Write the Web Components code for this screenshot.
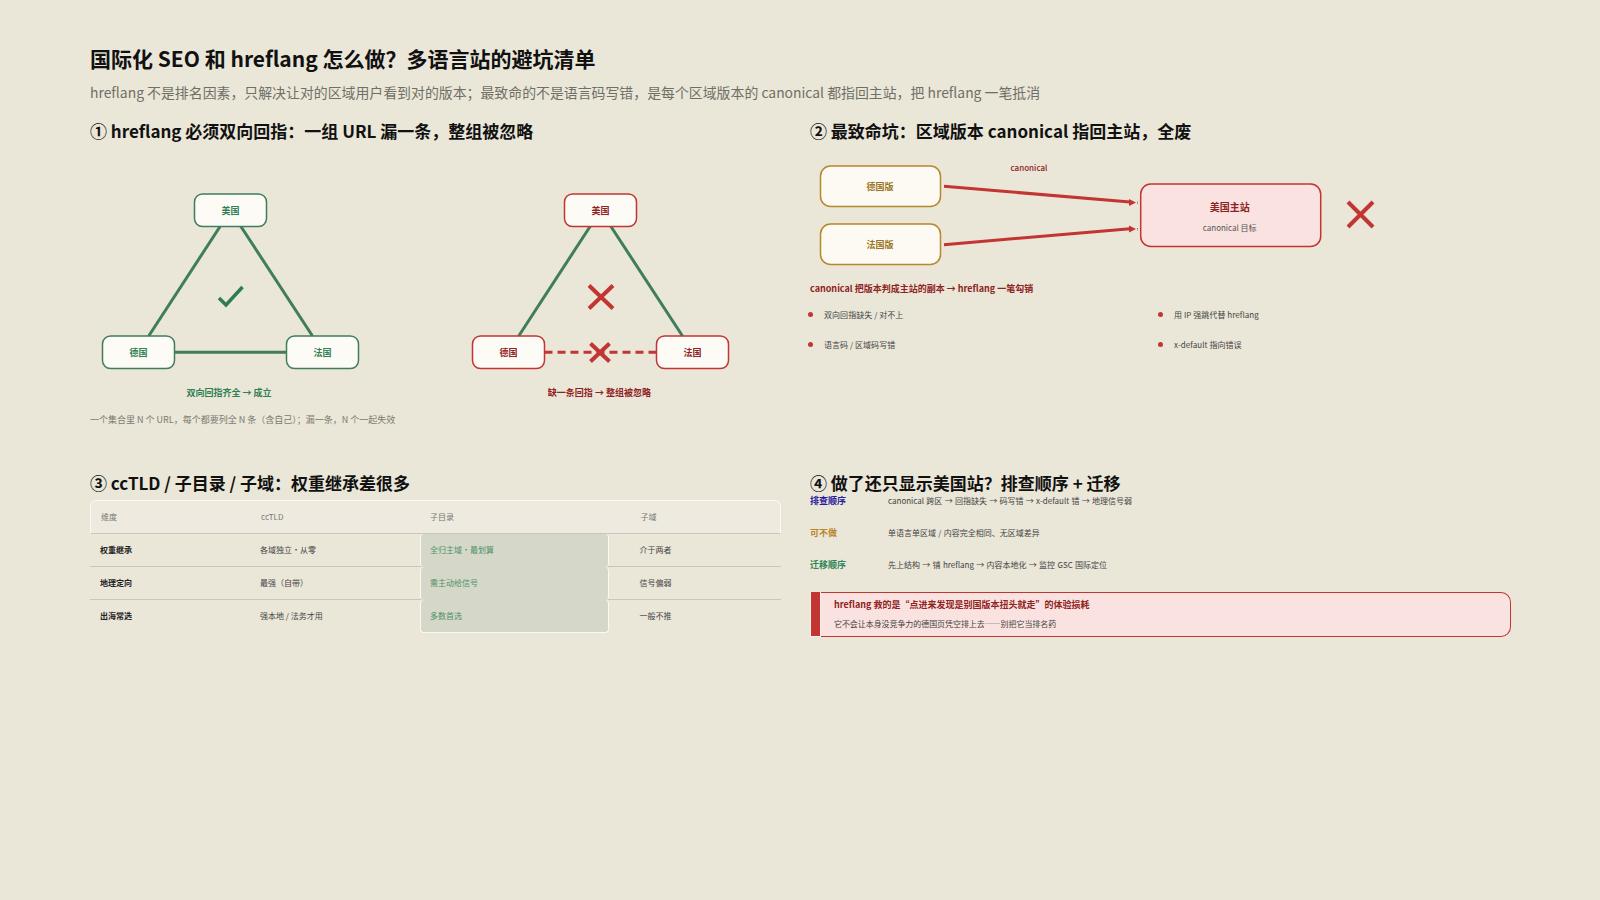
<!DOCTYPE html>
<html lang="zh"><head><meta charset="utf-8"><title>hreflang</title>
<style>
html,body{margin:0;padding:0;background:#eae6d8;}
body{font-family:"Noto Sans CJK SC","Noto Sans",sans-serif;width:1600px;height:900px;overflow:hidden;}
</style></head><body>
<x-page>
  <x-header slot="header" heading="国际化 SEO 和 hreflang 怎么做&#xFF1F;多语言站的避坑清单" sub="hreflang 不是排名因素&#xFF0C;只解决让对的区域用户看到对的版本&#xFF1B;最致命的不是语言码写错&#xFF0C;是每个区域版本的 canonical 都指回主站&#xFF0C;把 hreflang 一笔抵消"></x-header>
  <x-section heading="① hreflang 必须双向回指&#xFF1A;一组 URL 漏一条&#xFF0C;整组被忽略">
    <div style="display:flex"><x-triangle></x-triangle><x-triangle variant="bad"></x-triangle></div>
    <x-note>一个集合里 N 个 URL&#xFF0C;每个都要列全 N 条&#xFF08;含自己&#xFF09;&#xFF1B;漏一条&#xFF0C;N 个一起失效</x-note>
  </x-section>
  <x-section heading="② 最致命坑&#xFF1A;区域版本 canonical 指回主站&#xFF0C;全废">
    <x-canonical></x-canonical>
    <x-bullets>
      <x-bullet>双向回指缺失 / 对不上</x-bullet><x-bullet>用 IP 强跳代替 hreflang</x-bullet>
      <x-bullet>语言码 / 区域码写错</x-bullet><x-bullet>x-default 指向错误</x-bullet>
    </x-bullets>
  </x-section>
  <x-section heading="③ ccTLD / 子目录 / 子域&#xFF1A;权重继承差很多">
    <x-compare></x-compare>
  </x-section>
  <x-section heading="④ 做了还只显示美国站&#xFF1F;排查顺序 + 迁移">
    <x-kv label="排查顺序" color="#2a1a9c">canonical 跨区 → 回指缺失 → 码写错 → x-default 错 → 地理信号弱</x-kv>
    <x-kv label="可不做" color="#b8862b">单语言单区域 / 内容完全相同、无区域差异</x-kv>
    <x-kv label="迁移顺序" color="#2e8558">先上结构 → 铺 hreflang → 内容本地化 → 监控 GSC 国际定位</x-kv>
    <x-callout heading="hreflang 救的是“点进来发现是别国版本扭头就走”的体验损耗">它不会让本身没竞争力的德国页凭空排上去——别把它当排名药</x-callout>
  </x-section>
</x-page>
<script>
const RED='#c23532';
function def(name, html, init){
  customElements.define(name, class extends HTMLElement{
    constructor(){super();this.attachShadow({mode:'open'});}
    connectedCallback(){this.shadowRoot.innerHTML = typeof html==='function'?html(this):html; if(init)init(this);}
  });
}
def('x-page',`<style>
:host{display:block;box-sizing:border-box;width:1600px;height:900px;padding:42px 89px 0 90px;color:#111;}
.g{display:grid;grid-template-columns:691px 701px;grid-template-rows:352px auto;column-gap:29px;}
</style><slot name="header"></slot><div class="g"><slot></slot></div>`);
def('x-header',h=>`<style>
:host{display:block;height:76px;}
h1{margin:0;font-size:21px;line-height:32px;font-weight:700;color:#111;}
p{margin:7px 0 0;font-size:13.9px;line-height:22px;color:#706f66;}
</style><h1>${h.getAttribute('heading')}</h1><p>${h.getAttribute('sub')}</p>`);
def('x-section',h=>`<style>
:host{display:block;}
h2{margin:0;padding-top:1px;box-sizing:border-box;font-size:17px;line-height:24px;height:24px;font-weight:700;color:#111;}
</style><h2>${h.getAttribute('heading')}</h2><slot></slot>`);
def('x-note',`<style>:host{display:block;font-size:9px;line-height:14px;color:#7a7a6e;margin-top:9px;}</style><slot></slot>`);
const node=(x,y,t,c,tc)=>`<rect x="${x}" y="${y}" width="72" height="32.5" rx="8" fill="#fdfbf6" stroke="${c}" stroke-width="1.5"/><text x="${x+36}" y="${y+20}" text-anchor="middle" fill="${tc}" font-size="9" font-weight="700">${t}</text>`;
def('x-triangle',h=>{
 const bad=h.getAttribute('variant')==='bad';
 const c=bad?RED:'#3f7d5c', tc=bad?'#8f2222':'#2e8055';
 const lc='#3f7d5c';
 return `<style>:host{display:block;width:370px;height:262px;}svg{display:block;font-family:"Noto Sans CJK SC",sans-serif;}</style>
 <svg width="370" height="262" viewBox="0 0 370 262">
 <g transform="translate(0 8)">
 <line x1="130.4" y1="76" x2="58.7" y2="186" stroke="${lc}" stroke-width="3"/>
 <line x1="150.6" y1="76" x2="222.5" y2="186" stroke="${lc}" stroke-width="3"/>
 ${bad?`<line x1="84.5" y1="202.3" x2="196.5" y2="202.3" stroke="${RED}" stroke-width="3" stroke-dasharray="8 5"/>
 <path d="M130.5 193.5L149.5 211.5M149.5 193.5L130.5 211.5" stroke="${RED}" stroke-width="4" fill="none"/>
 <path d="M129 135.5L153 158.5M153 135.5L129 158.5" stroke="${RED}" stroke-width="4" fill="none"/>`
 :`<line x1="84.5" y1="202.3" x2="196.5" y2="202.3" stroke="${lc}" stroke-width="3"/>
 <path d="M129 148L136 155L152.5 137" stroke="#2e7d52" stroke-width="3.5" fill="none"/>`}
 ${node(104.5,44,'美国',c,tc)}${node(12.5,186,'德国',c,tc)}${node(196.5,186,'法国',c,tc)}
 <text x="${bad?139.4:139}" y="246" text-anchor="middle" font-size="9" font-weight="700" fill="${tc}">${bad?'缺一条回指 → 整组被忽略':'双向回指齐全 → 成立'}</text>
 </g></svg>`;
});
def('x-canonical',`<style>:host{display:block;width:701px;height:154px;}svg{display:block;font-family:"Noto Sans CJK SC",sans-serif;}</style>
<svg width="701" height="154" viewBox="0 0 701 154">
<g transform="translate(0 2)">
<rect x="10.5" y="22" width="120" height="40.5" rx="10" fill="#fdfaf3" stroke="#b8862b" stroke-width="1.5"/>
<text x="70" y="46" text-anchor="middle" font-size="9" font-weight="700" fill="#9a7424">德国版</text>
<rect x="10.5" y="80" width="120" height="40.5" rx="10" fill="#fdfaf3" stroke="#b8862b" stroke-width="1.5"/>
<text x="70" y="104" text-anchor="middle" font-size="9" font-weight="700" fill="#9a7424">法国版</text>
<rect x="330.7" y="40" width="180" height="62.5" rx="10" fill="#f9e2df" stroke="${RED}" stroke-width="1.5"/>
<text x="419.7" y="67" text-anchor="middle" font-size="10" font-weight="700" fill="#8f2222">美国主站</text>
<text x="419.7" y="87" text-anchor="middle" font-size="8" fill="#555">canonical 目标</text>
<line x1="134" y1="42.3" x2="320" y2="58" stroke="${RED}" stroke-width="3"/>
<line x1="134" y1="100.7" x2="320" y2="84.7" stroke="${RED}" stroke-width="3"/>
<path d="M319 55L326 58.5L319 62ZM327 57.5h.9v.9h-.9zM327 59.2h.9v.9h-.9z" fill="${RED}"/>
<path d="M319 81.5L326 85L319 88.5ZM327 84h.9v.9h-.9zM327 85.7h.9v.9h-.9z" fill="${RED}"/>
<text x="219" y="26.5" text-anchor="middle" font-size="8" font-weight="500" fill="#8f2222">canonical</text>
<path d="M538 58L563 83M563 58L538 83" stroke="${RED}" stroke-width="4" fill="none"/>
<text x="0" y="147.5" font-size="9" font-weight="700" fill="#8f2222">canonical 把版本判成主站的副本 → hreflang 一笔勾销</text>
</g></svg>`);
def('x-bullets',`<style>:host{display:grid;grid-template-columns:350px 350px;grid-auto-rows:30px;margin-top:3px;}</style><slot></slot>`);
def('x-bullet',`<style>:host{display:flex;align-items:center;gap:11px;font-size:8px;color:#444;height:30px;letter-spacing:.05px;}
i{width:5px;height:5px;border-radius:50%;background:${RED};margin-left:-2px;}</style><i></i><span><slot></slot></span>`);
const rows=[['权重继承','各域独立・从零','全归主域・最划算','介于两者'],['地理定向','最强\uFF08自带\uFF09','需主动给信号','信号偏弱'],['出海常选','强本地 / 法务才用','多数首选','一般不推']];
def('x-compare',`<style>
:host{display:block;font-size:8px;margin-top:6px;}
.r{display:grid;grid-template-columns:160px 170px 188.5px 172.5px;grid-template-rows:31px;height:33px;align-items:center;box-sizing:border-box;border-bottom:1px solid #c9c7b8;}
.r:last-child{border-bottom:0;}
.r>span{padding-left:10px;}
.h{height:34px;grid-template-rows:31px;background:#eeeadf;border:1px solid #fbf9f3;border-bottom:1px solid #c9c7b8;border-radius:6px 6px 0 0;margin:0;}
.r span.b{font-weight:700;color:#222;}
.r>span{color:#444;}
.h>span{color:#777;}
.r>span:nth-child(4){padding-left:31px;}
.r>span.m{height:33px;line-height:32px;box-sizing:border-box;background:#d5d8c9;border:solid #fbf9f3;border-width:0 1px;border-radius:4px;color:#4f9068;padding-left:9px;align-self:start;position:relative;}
.r:last-child>span.m{border-bottom-width:1px;}
.h>span:nth-child(3){padding-left:9px;}
</style>
<div class="r h"><span>维度</span><span>ccTLD</span><span>子目录</span><span>子域</span></div>
${rows.map(r=>`<div class="r"><span class="b">${r[0]}</span><span>${r[1]}</span><span class="m">${r[2]}</span><span>${r[3]}</span></div>`).join('')}`);
def('x-kv',h=>`<style>
:host{display:grid;grid-template-columns:78px 1fr;height:32px;font-size:8px;line-height:10px;color:#444;margin-top:2px;margin-bottom:-2px;}
b{font-size:9px;font-weight:700;color:${h.getAttribute('color')};}
span{line-height:10px;word-spacing:.5px;}
</style><b>${h.getAttribute('label')}</b><span><slot></slot></span>`);
def('x-callout',h=>`<style>
:host{display:flex;box-sizing:border-box;height:45px;margin-top:2px;}
i{width:11.5px;margin-left:-.5px;box-sizing:border-box;background:${RED};border:solid #f7f1ea;border-width:0 1px 1px .5px;}
div{flex:1;box-sizing:border-box;background:#f9e2df;border:1.5px solid ${RED};border-left:0;border-radius:0 10px 10px 0;padding:4px 14px 4px 13px;}
b{display:block;font-size:9px;line-height:16px;font-weight:700;color:#8f2222;}
span{display:block;font-size:8px;line-height:14px;color:#444;margin-top:4px;letter-spacing:-.07px;}
</style><i></i><div><b>${h.getAttribute('heading')}</b><span><slot></slot></span></div>`);
</script>
</body></html>
